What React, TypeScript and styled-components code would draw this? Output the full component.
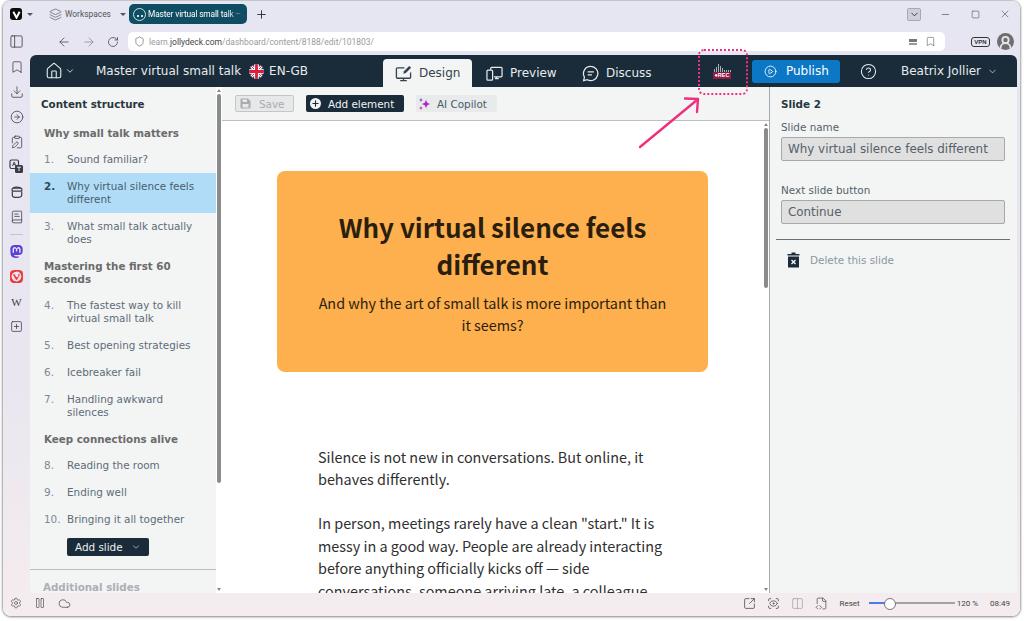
import React from "react";
import styled, { createGlobalStyle } from "styled-components";
import {
  ArrowLeft,
  ArrowRight,
  Bookmark,
  BookText,
  ChevronDown,
  CircleArrowRight,
  CirclePlay,
  CircleHelp,
  ClipboardPen,
  Cloud,
  Columns2,
  Download,
  FileCode2,
  Home,
  Layers,
  Minus,
  PanelLeft,
  Pause,
  Plus,
  RotateCw,
  ScanEye,
  Settings,
  Shield,
  Square,
  SquareArrowOutUpRight,
  SquarePlus,
  UserRound,
  X,
} from "lucide-react";
import { SiMastodon, SiVivaldi } from "react-icons/si";

const GlobalStyle = createGlobalStyle`
  html, body {
    margin: 0;
    padding: 0;
    background: #fff;
    overflow: hidden;
  }
  * { box-sizing: border-box; }
  svg { flex: none; }
`;

const Page = styled.div`
  position: relative;
  width: 1024px;
  height: 621px;
  padding: 1px 4px 5px 3px;
  font-family: "DejaVu Sans", sans-serif;
`;

const Win = styled.div`
  display: flex;
  flex-direction: column;
  height: 100%;
  border-radius: 8px;
  overflow: hidden;
  background: linear-gradient(180deg, #e6e5f2 0%, #e9e6f0 60%, #f5ecee 100%);
  box-shadow: 0 0 2px 1px rgba(0, 0, 0, 0.28), 0 1px 3px rgba(0, 0, 0, 0.25);
`;

const chromeFont = `Roboto, "Liberation Sans", sans-serif`;

const TabBar = styled.div`
  flex: none;
  display: flex;
  align-items: center;
  height: 28px;
  padding: 0 0 2px 7px;
  color: #333;
  font-family: ${chromeFont};
  font-size: 8.4px;
`;

const Logo = styled.div`
  width: 12px;
  height: 12px;
  border-radius: 3px;
  background: #0c0c0c;
  display: flex;
  align-items: center;
  justify-content: center;
`;

const Caret = styled.span<{ $gap?: number }>`
  flex: none;
  width: 0;
  height: 0;
  margin-left: ${(p) => p.$gap ?? 5}px;
  border-left: 3px solid transparent;
  border-right: 3px solid transparent;
  border-top: 3px solid #555;
`;

const Workspaces = styled.div`
  flex: none;
  display: flex;
  align-items: center;
  gap: 3px;
  margin-left: 16px;
  width: 80px;
  color: #555;
`;

const BrowserTab = styled.div`
  flex: none;
  display: flex;
  align-items: center;
  gap: 2px;
  width: 118px;
  height: 20px;
  padding-left: 4px;
  border-radius: 5px;
  background: #0e4d62;
  color: #fff;
  white-space: nowrap;
  overflow: hidden;
`;

const TabTitle = styled.span`
  flex: 1;
  overflow: hidden;
  letter-spacing: -0.15px;
  -webkit-mask-image: linear-gradient(90deg, #000 80%, transparent 98%);
  mask-image: linear-gradient(90deg, #000 80%, transparent 98%);
`;

const TabIcon = styled.span`
  flex: none;
  width: 13px;
  height: 13px;
  border: 1px solid #cfe0e6;
  border-radius: 50%;
  display: flex;
  align-items: center;
  justify-content: center;
  gap: 2px;
  &::before, &::after {
    content: "";
    width: 2px;
    height: 2px;
    margin-top: 4px;
    background: #cfe0e6;
  }
`;

const NewTab = styled.div`
  margin-left: 8px;
  display: flex;
  color: #222;
`;

const WindowControls = styled.div`
  margin-left: auto;
  display: flex;
  align-items: center;
  color: #555;
`;

const DropButton = styled.div`
  width: 14px;
  height: 13px;
  margin-right: 9px;
  border: 1px solid #a8a8b4;
  border-radius: 2px;
  background: #cfcfdc;
  display: flex;
  align-items: center;
  justify-content: center;
  color: #333;
`;

const ControlSlot = styled.div`
  width: 30px;
  display: flex;
  justify-content: center;
`;

const Body = styled.div`
  flex: 1;
  min-height: 0;
  display: flex;
`;

const Rail = styled.div`
  flex: none;
  width: 27px;
  display: flex;
  flex-direction: column;
  align-items: center;
`;

const RailSlot = styled.div<{ $color?: string }>`
  height: 25px;
  width: 27px;
  display: flex;
  align-items: center;
  justify-content: center;
  color: ${(p) => p.$color ?? "#3c3c44"};
  font-family: "Liberation Serif", serif;
  font-size: 11px;
`;

const RailRule = styled.div`
  width: 13px;
  height: 1px;
  margin: 5px 0 4px;
  background: #c4c4ce;
`;

const Column = styled.div`
  flex: 1;
  min-width: 0;
  display: flex;
  flex-direction: column;
`;

const AddressRow = styled.div`
  flex: none;
  height: 26px;
  display: flex;
  align-items: flex-start;
  padding-top: 3px;
  color: #444;
`;

const NavIcons = styled.div`
  flex: none;
  width: 98px;
  height: 19px;
  padding-left: 27px;
  display: flex;
  align-items: center;
  gap: 11px;
`;

const UrlPill = styled.div`
  flex: none;
  width: 817px;
  height: 19px;
  padding: 0 6px;
  border-radius: 5px;
  background: #fff;
  display: flex;
  align-items: center;
  font-family: ${chromeFont};
  font-size: 8.5px;
  color: #9a9a9a;
  white-space: nowrap;
`;

const UrlHost = styled.span`
  color: #444;
`;

const UrlText = styled.span`
  margin-left: 4px;
  flex: 1;
`;

const UrlIcons = styled.div`
  display: flex;
  gap: 8px;
  color: #666;
  margin-right: 3px;
`;

const Reader = styled.span`
  width: 8px;
  height: 6px;
  margin-top: 3px;
  background: linear-gradient(#777 0 3px, transparent 3px, transparent 4px, #999 4px);
`;

const AddressRight = styled.div`
  flex: 1;
  height: 19px;
  display: flex;
  align-items: center;
  padding-left: 26px;
  gap: 7px;
`;

const Vpn = styled.div`
  width: 19px;
  height: 10px;
  border: 1px solid #333;
  border-radius: 3px;
  font-family: "Liberation Sans", sans-serif;
  font-size: 6px;
  font-weight: 700;
  line-height: 8px;
  text-align: center;
  color: #333;
`;

const Avatar = styled.div`
  width: 17px;
  height: 17px;
  border-radius: 50%;
  background: #6e6e6e;
  color: #e6e6ee;
  display: flex;
  align-items: flex-end;
  justify-content: center;
  overflow: hidden;
`;

const AppFrame = styled.div`
  flex: 1;
  min-height: 0;
  margin-right: 3px;
  border-radius: 6px 6px 0 0;
  overflow: hidden;
  display: flex;
  flex-direction: column;
  background: #f3f4f4;
`;

const Header = styled.header`
  flex: none;
  height: 32px;
  background: #1a2c39;
  color: #e6ebee;
  display: flex;
  align-items: flex-end;
  font-size: 12px;
`;

const HeaderItem = styled.div<{ $ml: number }>`
  height: 32px;
  display: flex;
  align-items: center;
  margin-left: ${(p) => p.$ml}px;
  white-space: nowrap;
`;

const HomeChevron = styled.span`
  display: flex;
  margin-left: 2px;
`;

const UserChevron = styled.span`
  display: flex;
  margin-left: 6px;
`;

const Flag = styled.svg`
  margin: 0 5px 0 8px;
  border-radius: 50%;
`;

const Tab = styled.div<{ $active?: boolean; $w: number; $pad: number }>`
  width: ${(p) => p.$w}px;
  height: 28px;
  padding-left: ${(p) => p.$pad}px;
  display: flex;
  align-items: center;
  gap: 7px;
  border-radius: 4px 4px 0 0;
  background: ${(p) => (p.$active ? "#f3f4f4" : "transparent")};
  color: ${(p) => (p.$active ? "#33434f" : "#e6ebee")};
`;

const Tabs = styled.div`
  display: flex;
  margin-left: 75px;
`;

const RecBadge = styled.div`
  width: 20px;
  margin-left: 42px;
  align-self: center;
  display: flex;
  flex-direction: column;
  align-items: center;
`;

const RecLabel = styled.div`
  width: 18px;
  height: 7px;
  background: #8e1b45;
  color: #fff;
  font-family: "Liberation Sans", sans-serif;
  font-size: 5.5px;
  font-weight: 700;
  line-height: 7px;
  text-align: center;
`;

const PublishButton = styled.div`
  width: 88px;
  height: 23px;
  margin-left: 20px;
  padding-left: 12px;
  border-radius: 3px;
  background: #0b77c5;
  color: #fff;
  display: flex;
  align-items: center;
  gap: 9px;
  align-self: center;
`;

const Workspace = styled.div`
  flex: 1;
  min-height: 0;
  display: flex;
`;

const Sidebar = styled.aside`
  flex: none;
  width: 186px;
  overflow: hidden;
  font-size: 10.4px;
  line-height: 13px;
  color: #5d6c78;
`;

const SideTitle = styled.div`
  height: 33px;
  padding: 11px 0 0 11px;
  font-size: 10.3px;
  font-weight: 700;
  color: #29373f;
`;

const Section = styled.div`
  padding: 7px 10px 6px 14px;
  font-size: 10.3px;
  font-weight: 700;
  color: #6b6b6b;
`;

const Item = styled.div<{ $active?: boolean }>`
  display: flex;
  padding: 7px 10px 7px 14px;
  background: ${(p) => (p.$active ? "#b0dcf8" : "transparent")};
  color: ${(p) => (p.$active ? "#4a5c6a" : "#5d6c78")};
`;

const ItemNumber = styled.span<{ $active?: boolean }>`
  flex: none;
  width: 23px;
  font-weight: ${(p) => (p.$active ? 700 : 400)};
  color: ${(p) => (p.$active ? "#33475b" : "#7c8a94")};
`;

const AddSlide = styled.div`
  width: 82px;
  height: 18px;
  margin: 5px 0 13px 37px;
  padding: 0 8px;
  border-radius: 2px;
  background: #1a2c39;
  color: #eef1f3;
  display: flex;
  align-items: center;
  justify-content: space-between;
`;

const SideRule = styled.div`
  height: 1px;
  background: #b9bdc2;
`;

const Additional = styled.div`
  padding: 11px 0 0 13px;
  font-size: 10.3px;
  font-weight: 700;
  color: #aab0b5;
`;

const Track = styled.div<{ $w: number }>`
  flex: none;
  width: ${(p) => p.$w}px;
  display: flex;
  flex-direction: column;
  align-items: flex-start;
  background: #fff;
`;

const TrackArrow = styled.span<{ $down?: boolean }>`
  flex: none;
  width: 0;
  height: 0;
  margin: 2px 0 2px 0.5px;
  border-left: 2.5px solid transparent;
  border-right: 2.5px solid transparent;
  ${(p) => (p.$down ? "border-top: 3px solid #888;" : "border-bottom: 3px solid #888;")}
`;

const Thumb = styled.div<{ $h: number }>`
  flex: none;
  width: 4px;
  height: ${(p) => p.$h}px;
  margin-left: 1px;
  background: #8b8b8b;
  border-radius: 2px;
`;

const TrackSpace = styled.div`
  flex: 1;
`;

const Center = styled.main`
  flex: none;
  width: 548px;
  display: flex;
  flex-direction: column;
  border-right: 1px solid #a9a9a9;
`;

const Toolbar = styled.div`
  flex: none;
  height: 34px;
  display: flex;
  align-items: flex-start;
  padding: 8px 0 0 13px;
  border-bottom: 1px solid #bdbdbd;
  font-size: 10.4px;
`;

const ToolButton = styled.div<{
  $kind: "save" | "dark" | "soft";
  $w: number;
  $ml: number;
  $gap: number;
  $pad: number;
}>`
  width: ${(p) => p.$w}px;
  height: 17px;
  margin-left: ${(p) => p.$ml}px;
  display: flex;
  align-items: center;
  gap: ${(p) => p.$gap}px;
  padding-left: ${(p) => p.$pad}px;
  border-radius: 2px;
  background: ${(p) => (p.$kind === "dark" ? "#1a2c39" : p.$kind === "soft" ? "#e8eaeb" : "#e6e8e9")};
  color: ${(p) => (p.$kind === "dark" ? "#f0f2f4" : p.$kind === "soft" ? "#4c5a66" : "#a8adb2")};
  border: ${(p) => (p.$kind === "save" ? "1px solid #c4c6c8" : "none")};
`;

const AddDot = styled.span`
  width: 11px;
  height: 11px;
  border-radius: 50%;
  background: #f0f2f4;
  color: #1a2c39;
  display: flex;
  align-items: center;
  justify-content: center;
`;

const CenterBody = styled.div`
  flex: 1;
  min-height: 0;
  display: flex;
  background: #fff;
`;

const Slide = styled.div`
  flex: 1;
  overflow: hidden;
  padding: 50px 0 0 55px;
  font-family: "Noto Sans CJK SC", "Noto Sans", sans-serif;
  color: #2f2f2f;
`;

const Hero = styled.div`
  width: 431px;
  height: 201px;
  padding: 37px 40px 0;
  border-radius: 8px;
  background: #ffb04e;
  color: #2a1f0e;
  text-align: center;
`;

const HeroTitle = styled.h1`
  margin: 0;
  font-size: 26px;
  font-weight: 700;
  line-height: 37px;
`;

const HeroText = styled.p`
  margin: 10px 0 0;
  font-size: 14.4px;
  line-height: 22px;
`;

const Prose = styled.p`
  width: 350px;
  margin: 0 0 21.5px 41px;
  font-size: 14.4px;
  line-height: 22.4px;
  &:first-of-type {
    margin-top: 74px;
  }
`;

const Inspector = styled.aside`
  flex: 1;
  padding: 11px 7px 0 11px;
  font-size: 10.4px;
  color: #55616b;
`;

const InspectorTitle = styled.div`
  font-weight: 700;
  color: #29373f;
  line-height: 13px;
`;

const FieldLabel = styled.div<{ $mt: number }>`
  margin-top: ${(p) => p.$mt}px;
  line-height: 13px;
`;

const FieldInput = styled.div`
  width: 224px;
  height: 24px;
  margin-top: 3px;
  padding-left: 6px;
  border: 1px solid #a8a8a8;
  border-radius: 2px;
  background: #e0e0e0;
  color: #55616b;
  font-size: 11.9px;
  line-height: 22px;
  white-space: nowrap;
`;

const InspectorRule = styled.div`
  height: 1px;
  margin: 15px 0 0 -5px;
  background: #6f6f6f;
`;

const DeleteRow = styled.div`
  display: flex;
  align-items: center;
  gap: 10px;
  margin: 12px 0 0 6px;
  color: #8a97a3;
`;

const StatusBar = styled.footer`
  flex: none;
  height: 23px;
  padding: 0 10px 3px 7px;
  display: flex;
  align-items: center;
  color: #444;
  font-family: ${chromeFont};
  font-size: 8px;
`;

const StatusLeft = styled.div`
  display: flex;
  align-items: center;
  gap: 12px;
`;

const StatusRight = styled.div`
  margin-left: auto;
  display: flex;
  align-items: center;
`;

const StatusIcons = styled.div`
  display: flex;
  align-items: center;
  gap: 11px;
  margin-right: 12px;
`;

const Slider = styled.div`
  position: relative;
  width: 86px;
  height: 2px;
  margin: 0 2px 0 9px;
  background: linear-gradient(90deg, #4f7be8 0 18px, #a2a2a2 18px);
  &::after {
    content: "";
    position: absolute;
    left: 15px;
    top: -4px;
    width: 10px;
    height: 10px;
    border: 1px solid #777;
    border-radius: 50%;
    background: #fff;
  }
`;

const Clock = styled.span`
  margin-left: 12px;
`;

// annotation painted over the screenshot
const Callout = styled.div`
  position: absolute;
  left: 698px;
  top: 49px;
  width: 50px;
  height: 46px;
  border: 2px dotted #f0307c;
  border-radius: 6px;
`;

const CalloutArrow = styled.svg`
  position: absolute;
  left: 630px;
  top: 90px;
`;

const items: { kind: "section" | "item"; label: string; n?: number; active?: boolean }[] = [
  { kind: "section", label: "Why small talk matters" },
  { kind: "item", n: 1, label: "Sound familiar?" },
  { kind: "item", n: 2, label: "Why virtual silence feels different", active: true },
  { kind: "item", n: 3, label: "What small talk actually does" },
  { kind: "section", label: "Mastering the first 60 seconds" },
  { kind: "item", n: 4, label: "The fastest way to kill virtual small talk" },
  { kind: "item", n: 5, label: "Best opening strategies" },
  { kind: "item", n: 6, label: "Icebreaker fail" },
  { kind: "item", n: 7, label: "Handling awkward silences" },
  { kind: "section", label: "Keep connections alive" },
  { kind: "item", n: 8, label: "Reading the room" },
  { kind: "item", n: 9, label: "Ending well" },
  { kind: "item", n: 10, label: "Bringing it all together" },
];

const TranslateIcon = () => (
  <svg width="15" height="15" viewBox="0 0 15 15">
    <rect x="1" y="1" width="8.5" height="8.5" rx="1.5" fill="none" stroke="currentColor" strokeWidth="1.2" />
    <path d="M3.5 7l1.7-4 1.7 4M4.2 5.6h2" fill="none" stroke="currentColor" strokeWidth="0.9" />
    <rect x="6" y="6" width="8" height="8" rx="1.5" fill="currentColor" />
    <path d="M8 8.2h4M10 8.2V12" stroke="#e6e5f2" strokeWidth="1" />
  </svg>
);

const JarIcon = () => (
  <svg width="14" height="14" viewBox="0 0 14 14" fill="none" stroke="currentColor" strokeWidth="1.2">
    <path d="M3.5 3.2C3.5 1.8 10.5 1.8 10.5 3.2" />
    <rect x="2" y="3.2" width="10" height="3" rx="1.5" />
    <path d="M2.3 6.2v4.3c0 2.6 9.4 2.6 9.4 0V6.2" />
  </svg>
);

const railIcons = [
  <PanelLeft size={15} strokeWidth={1.3} />,
  <Bookmark size={14} strokeWidth={1.3} />,
  <Download size={14} strokeWidth={1.3} />,
  <CircleArrowRight size={14} strokeWidth={1.3} />,
  <ClipboardPen size={14} strokeWidth={1.3} />,
  <TranslateIcon />,
  <JarIcon />,
  <BookText size={14} strokeWidth={1.3} />,
];

const UkFlag = () => (
  <Flag width="15" height="15" viewBox="0 0 16 16">
    <rect width="16" height="16" fill="#2b3f87" />
    <path d="M0 0L16 16M16 0L0 16" stroke="#fff" strokeWidth="3" />
    <path d="M0 0L16 16M16 0L0 16" stroke="#d8203a" strokeWidth="1" />
    <path d="M8 0V16M0 8H16" stroke="#fff" strokeWidth="5" />
    <path d="M8 0V16M0 8H16" stroke="#d8203a" strokeWidth="3" />
  </Flag>
);

const DesignIcon = () => (
  <svg width="17" height="17" viewBox="0 0 18 18" fill="none" stroke="currentColor" strokeWidth="1.4">
    <path d="M10 3H2.5a1 1 0 0 0-1 1v9a1 1 0 0 0 1 1h13a1 1 0 0 0 1-1V8" />
    <path d="M9 14v2.5M5.5 16.5h7" />
    <path d="M15 1l2 2-5.5 5.5-2.7.7.7-2.7z" fill="currentColor" stroke="none" />
  </svg>
);

const PreviewIcon = () => (
  <svg width="17" height="17" viewBox="0 0 18 18" fill="none" stroke="currentColor" strokeWidth="1.3">
    <path d="M5 5V3.5a1 1 0 0 1 1-1h10a1 1 0 0 1 1 1v8a1 1 0 0 1-1 1H8.5" />
    <rect x="1" y="5.5" width="6" height="10.5" rx="1" />
    <path d="M11 12.5v2M9.5 14.5h4" />
  </svg>
);

const DiscussIcon = () => (
  <svg width="17" height="17" viewBox="0 0 18 18" fill="none" stroke="currentColor" strokeWidth="1.3">
    <path d="M9.3 1.5a7.5 7.5 0 1 1-3.6 14.1l-4 .9.9-3.7A7.5 7.5 0 0 1 9.3 1.5z" />
    <path d="M6 7.3h6.5M6 10.5h4.5" />
  </svg>
);

const Sparkle = () => (
  <svg width="14" height="14" viewBox="0 0 14 14">
    <path d="M8 3l1.3 2.7L12 7 9.3 8.3 8 11 6.7 8.3 4 7l2.7-1.3z" fill="#b026c9" />
    <path d="M3 1l.6 1.4L5 3l-1.4.6L3 5l-.6-1.4L1 3l1.4-.6z" fill="#6b3fd8" />
    <path d="M3 9l.6 1.4L5 11l-1.4.6L3 13l-.6-1.4L1 11l1.4-.6z" fill="#d0269a" />
  </svg>
);

const RecBars = () => (
  <svg width="18" height="8" viewBox="0 0 18 8">
    <path
      d="M1.5 8V5M3.5 8V3M5.5 8V0M7.5 8V2M9.5 8V4M11.5 8V6M13.5 8V6M15.5 8V6M17.5 8V6"
      stroke="#a8b0b6"
      strokeWidth="1"
    />
  </svg>
);

const SaveIcon = () => (
  <svg width="11" height="11" viewBox="0 0 11 11">
    <path d="M0.5 1.5a1 1 0 0 1 1-1h6.5l2.5 2.5v6.5a1 1 0 0 1-1 1h-8a1 1 0 0 1-1-1z" fill="#a8adb2" />
    <rect x="2.5" y="1.5" width="4.5" height="2.5" fill="#e6e8e9" />
    <rect x="2.5" y="6" width="6" height="3.5" fill="#e6e8e9" />
  </svg>
);

const TrashIcon = () => (
  <svg width="13" height="16" viewBox="0 0 13 16">
    <path d="M4.5 0.5h4v1.5h4v1.5H0.5V2h4z" fill="#1a2c39" />
    <rect x="1" y="4.5" width="11" height="11" fill="#1a2c39" />
    <path d="M4.5 8l4 4M8.5 8l-4 4" stroke="#fff" strokeWidth="1.3" />
  </svg>
);

const App = () => {
  return (
    <Page>
      <GlobalStyle />
      <Win>
        <TabBar>
          <Logo>
            <svg width="9" height="9" viewBox="0 0 10 10">
              <path d="M1.5 2L5 8.5 8.5 2" fill="none" stroke="#fff" strokeWidth="2.2" />
            </svg>
          </Logo>
          <Caret />
          <Workspaces>
            <Layers size={13} strokeWidth={1.2} />
            Workspaces
            <Caret $gap={6} />
          </Workspaces>
          <BrowserTab>
            <TabIcon />
            <TabTitle>Master virtual small talk – JollyDeck</TabTitle>
          </BrowserTab>
          <NewTab>
            <Plus size={13} strokeWidth={1.6} />
          </NewTab>
          <WindowControls>
            <DropButton>
              <ChevronDown size={11} strokeWidth={2} />
            </DropButton>
            <ControlSlot>
              <Minus size={11} strokeWidth={1.5} />
            </ControlSlot>
            <ControlSlot>
              <Square size={9} strokeWidth={1.6} />
            </ControlSlot>
            <ControlSlot>
              <X size={12} strokeWidth={1.3} />
            </ControlSlot>
          </WindowControls>
        </TabBar>
        <Body>
          <Rail>
            {railIcons.map((icon, i) => (
              <RailSlot key={i}>{icon}</RailSlot>
            ))}
            <RailRule />
            <RailSlot $color="#5b3fd6">
              <SiMastodon size={13} />
            </RailSlot>
            <RailSlot $color="#ef3939">
              <SiVivaldi size={13} />
            </RailSlot>
            <RailSlot>W</RailSlot>
            <RailSlot>
              <SquarePlus size={13} strokeWidth={1.4} />
            </RailSlot>
          </Rail>
          <Column>
            <AddressRow>
              <NavIcons>
                <ArrowLeft size={14} strokeWidth={1.3} />
                <ArrowRight size={14} strokeWidth={1.3} color="#888" />
                <RotateCw size={12} strokeWidth={1.5} />
              </NavIcons>
              <UrlPill>
                <Shield size={11} strokeWidth={1.4} color="#666" />
                <UrlText>
                  learn.<UrlHost>jollydeck.com</UrlHost>/dashboard/content/8188/edit/101803/
                </UrlText>
                <UrlIcons>
                  <Reader />
                  <Bookmark size={11} strokeWidth={1.4} />
                </UrlIcons>
              </UrlPill>
              <AddressRight>
                <Vpn>VPN</Vpn>
                <Avatar>
                  <UserRound size={15} strokeWidth={3} />
                </Avatar>
              </AddressRight>
            </AddressRow>
            <AppFrame>
              <Header>
                <HeaderItem $ml={15}>
                  <Home size={18} strokeWidth={1.5} />
                  <HomeChevron>
                    <ChevronDown size={10} strokeWidth={2} />
                  </HomeChevron>
                </HeaderItem>
                <HeaderItem $ml={21}>
                  Master virtual small talk
                  <UkFlag />
                  EN-GB
                </HeaderItem>
                <Tabs>
                  <Tab $active $w={89} $pad={12}>
                    <DesignIcon />
                    Design
                  </Tab>
                  <Tab $w={98} $pad={14}>
                    <PreviewIcon />
                    Preview
                  </Tab>
                  <Tab $w={100} $pad={12}>
                    <DiscussIcon />
                    Discuss
                  </Tab>
                </Tabs>
                <RecBadge>
                  <RecBars />
                  <RecLabel>●REC</RecLabel>
                </RecBadge>
                <PublishButton>
                  <CirclePlay size={13} strokeWidth={1.6} />
                  Publish
                </PublishButton>
                <HeaderItem $ml={20}>
                  <CircleHelp size={17} strokeWidth={1.5} />
                </HeaderItem>
                <HeaderItem $ml={24}>
                  Beatrix Jollier
                  <UserChevron>
                    <ChevronDown size={11} strokeWidth={1.5} />
                  </UserChevron>
                </HeaderItem>
              </Header>
              <Workspace>
                <Sidebar>
                  <SideTitle>Content structure</SideTitle>
                  {items.map((it) =>
                    it.kind === "section" ? (
                      <Section key={it.label}>{it.label}</Section>
                    ) : (
                      <Item key={it.label} $active={it.active}>
                        <ItemNumber $active={it.active}>{it.n}.</ItemNumber>
                        <span>{it.label}</span>
                      </Item>
                    )
                  )}
                  <AddSlide>
                    Add slide
                    <ChevronDown size={10} strokeWidth={1.5} />
                  </AddSlide>
                  <SideRule />
                  <Additional>Additional slides</Additional>
                </Sidebar>
                <Track $w={6}>
                  <TrackArrow />
                  <Thumb $h={389} />
                  <TrackSpace />
                  <TrackArrow $down />
                </Track>
                <Center>
                  <Toolbar>
                    <ToolButton $kind="save" $w={59} $ml={0} $gap={8} $pad={4}>
                      <SaveIcon />
                      Save
                    </ToolButton>
                    <ToolButton $kind="dark" $w={98} $ml={12} $gap={7} $pad={4}>
                      <AddDot>
                        <Plus size={9} strokeWidth={3} />
                      </AddDot>
                      Add element
                    </ToolButton>
                    <ToolButton $kind="soft" $w={81} $ml={12} $gap={5} $pad={2}>
                      <Sparkle />
                      AI Copilot
                    </ToolButton>
                  </Toolbar>
                  <CenterBody>
                    <Slide>
                      <Hero>
                        <HeroTitle>Why virtual silence feels different</HeroTitle>
                        <HeroText>And why the art of small talk is more important than it seems?</HeroText>
                      </Hero>
                      <Prose>Silence is not new in conversations. But online, it behaves differently.</Prose>
                      <Prose>
                        In person, meetings rarely have a clean "start." It is messy in a good way. People are
                        already interacting before anything officially kicks off — side conversations, someone
                        arriving late, a colleague
                      </Prose>
                    </Slide>
                    <Track $w={6}>
                      <TrackArrow />
                      <Thumb $h={160} />
                      <TrackSpace />
                      <TrackArrow $down />
                    </Track>
                  </CenterBody>
                </Center>
                <Inspector>
                  <InspectorTitle>Slide 2</InspectorTitle>
                  <FieldLabel $mt={10}>Slide name</FieldLabel>
                  <FieldInput>Why virtual silence feels different</FieldInput>
                  <FieldLabel $mt={23}>Next slide button</FieldLabel>
                  <FieldInput>Continue</FieldInput>
                  <InspectorRule />
                  <DeleteRow>
                    <TrashIcon />
                    Delete this slide
                  </DeleteRow>
                </Inspector>
              </Workspace>
            </AppFrame>
          </Column>
        </Body>
        <StatusBar>
          <StatusLeft>
            <Settings size={12} strokeWidth={1.3} />
            <Pause size={12} strokeWidth={1.3} />
            <Cloud size={13} strokeWidth={1.3} />
          </StatusLeft>
          <StatusRight>
            <StatusIcons>
              <SquareArrowOutUpRight size={13} strokeWidth={1.4} />
              <ScanEye size={13} strokeWidth={1.4} />
              <Columns2 size={13} strokeWidth={1.2} color="#999" />
              <FileCode2 size={13} strokeWidth={1.3} />
            </StatusIcons>
            Reset
            <Slider />
            120 %
            <Clock>08:49</Clock>
          </StatusRight>
        </StatusBar>
      </Win>
      <Callout />
      <CalloutArrow width="80" height="70" viewBox="0 0 80 70">
        <path
          d="M10 57L67 10M55 8.5L68 9L67 22"
          fill="none"
          stroke="#f0307c"
          strokeWidth="2.4"
          strokeLinecap="round"
          strokeLinejoin="round"
        />
      </CalloutArrow>
    </Page>
  );
};

export default App;
